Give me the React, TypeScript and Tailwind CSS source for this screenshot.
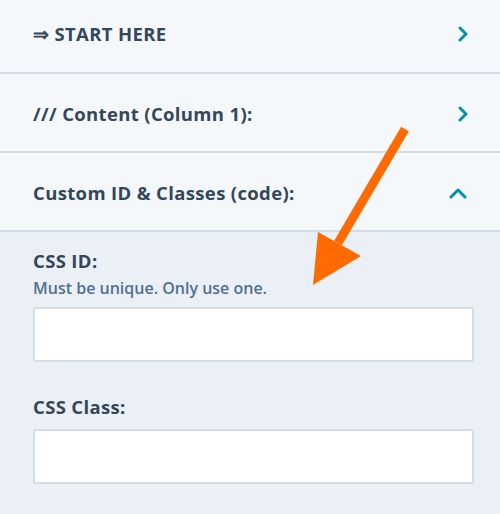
const font = { fontFamily: "'Open Sans', 'Noto Sans', sans-serif" };

const ChevronRight = () => (
  <svg width="12" height="16" viewBox="0 0 12 16" fill="none">
    <path d="M4 2l6 6-6 6" stroke="#0091ae" strokeWidth="3" strokeLinecap="round" strokeLinejoin="round" />
  </svg>
);

const ChevronUp = () => (
  <svg width="20" height="12" viewBox="0 0 20 12" fill="none">
    <path d="M3 10l7-7 7 7" stroke="#0091ae" strokeWidth="3" strokeLinecap="round" strokeLinejoin="round" />
  </svg>
);

const Row = ({ label, open, first }: { label: string; open?: boolean; first?: boolean }) => (
  <div
    className={`flex items-center justify-between pl-[33px] pr-[32px] border-b-2 border-[#d3dde8] bg-[#f5f8fa] ${
      first ? "h-[74px] pb-[4px]" : "h-[79px] pt-[2px]"
    }`}
  >
    <span className="text-[18.5px] font-bold text-[#33475b] tracking-[0.35px]">{label}</span>
    {open ? <ChevronUp /> : <ChevronRight />}
  </div>
);

export default function App() {
  return (
    <div className="relative w-[500px] h-[514px] overflow-hidden bg-[#eaf0f6]" style={font}>
      <Row label="⇒ START HERE" first />
      <Row label="/// Content (Column 1):" />
      <Row label="Custom ID & Classes (code):" open />

      <div className="pl-[33px] pt-[17px] pr-[26px]">
        <div className="text-[18.5px] font-bold text-[#33475b] leading-[24px] tracking-[0.35px]">CSS ID:</div>
        <div className="mt-[5px] text-[16px] font-semibold text-[#516f90] leading-[20px]">
          Must be unique. Only use one.
        </div>
        <div className="mt-[9px] h-[55px] rounded-[3px] border-2 border-[#d3dde8] bg-white" />

        <div className="mt-[33px] text-[18.5px] font-bold text-[#33475b] leading-[24px] tracking-[0.35px]">
          CSS Class:
        </div>
        <div className="mt-[10px] h-[55px] rounded-[3px] border-2 border-[#d3dde8] bg-white" />
      </div>

      {/* annotation arrow */}
      <svg className="absolute left-0 top-0" width="500" height="514" viewBox="0 0 500 514">
        <line x1="405" y1="129" x2="338" y2="243" stroke="#ff6b00" strokeWidth="9" />
        <polygon points="318,232 361,256 313,285" fill="#ff6b00" />
      </svg>
    </div>
  );
}
